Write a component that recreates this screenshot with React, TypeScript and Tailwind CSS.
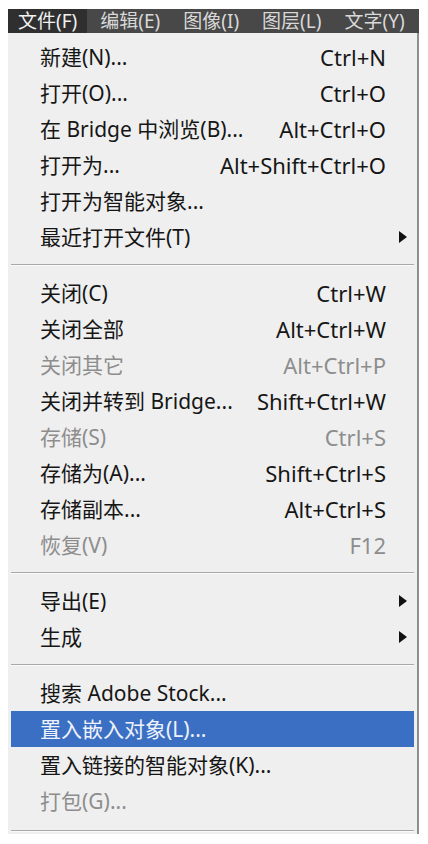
import React from "react";

type Item =
  | { kind: "row"; label: string; shortcut?: string; arrow?: boolean; disabled?: boolean; active?: boolean }
  | { kind: "sep" };

const items: Item[] = [
  { kind: "row", label: "新建(N)...", shortcut: "Ctrl+N" },
  { kind: "row", label: "打开(O)...", shortcut: "Ctrl+O" },
  { kind: "row", label: "在 Bridge 中浏览(B)...", shortcut: "Alt+Ctrl+O" },
  { kind: "row", label: "打开为...", shortcut: "Alt+Shift+Ctrl+O" },
  { kind: "row", label: "打开为智能对象..." },
  { kind: "row", label: "最近打开文件(T)", arrow: true },
  { kind: "sep" },
  { kind: "row", label: "关闭(C)", shortcut: "Ctrl+W" },
  { kind: "row", label: "关闭全部", shortcut: "Alt+Ctrl+W" },
  { kind: "row", label: "关闭其它", shortcut: "Alt+Ctrl+P", disabled: true },
  { kind: "row", label: "关闭并转到 Bridge...", shortcut: "Shift+Ctrl+W" },
  { kind: "row", label: "存储(S)", shortcut: "Ctrl+S", disabled: true },
  { kind: "row", label: "存储为(A)...", shortcut: "Shift+Ctrl+S" },
  { kind: "row", label: "存储副本...", shortcut: "Alt+Ctrl+S" },
  { kind: "row", label: "恢复(V)", shortcut: "F12", disabled: true },
  { kind: "sep" },
  { kind: "row", label: "导出(E)", arrow: true },
  { kind: "row", label: "生成", arrow: true },
  { kind: "sep" },
  { kind: "row", label: "搜索 Adobe Stock..." },
  { kind: "row", label: "置入嵌入对象(L)...", active: true },
  { kind: "row", label: "置入链接的智能对象(K)..." },
  { kind: "row", label: "打包(G)...", disabled: true },
];

const menus = ["文件(F)", "编辑(E)", "图像(I)", "图层(L)", "文字(Y)"];

function Arrow({ color }: { color: string }) {
  return (
    <svg width="8" height="12" viewBox="0 0 8 12" className="block">
      <polygon points="0,0 8,6 0,12" fill={color} />
    </svg>
  );
}

function Separator() {
  return (
    <div className="h-[20px] flex flex-col justify-center mx-[3px]">
      <div className="h-px bg-[#a9a9a9]" />
      <div className="h-px bg-[#fafafa]" />
    </div>
  );
}

export default function App() {
  return (
    <div className="min-h-[844px] bg-white pt-[9px] pl-[8px] font-['Noto_Sans','Noto_Sans_CJK_SC',sans-serif]">
      <div className="w-[411px]">
        <div className="flex h-[24px] bg-[#484848] gap-[3px] overflow-hidden whitespace-nowrap">
          {menus.map((m, i) => (
            <div
              key={m}
              className={
                i === 0
                  ? "px-[10px] h-[24px] leading-[24px] text-[19px] bg-[#2f2f2f] text-[#f2f2f2]"
                  : "px-[10px] h-[24px] leading-[24px] text-[19px] text-[#d9d9d9]"
              }
            >
              {m}
            </div>
          ))}
        </div>
        <div className="bg-[#efefef] border-r-2 border-[#8e8e8e] pt-[6px] pb-[2px]">
          {items.map((it, idx) => {
            if (it.kind === "sep") return <Separator key={idx} />;
            const textColor = it.active
              ? "text-[#eef2fa]"
              : it.disabled
              ? "text-[#8d8d8d]"
              : "text-[#161616]";
            return (
              <div
                key={idx}
                className={
                  "mx-[3px] h-[36px] flex items-center whitespace-nowrap " +
                  (it.active ? "bg-[#3b6fc3] " : "") +
                  textColor
                }
              >
                <div className="pl-[29px] flex-1 text-[21px] leading-[36px]">{it.label}</div>
                {it.shortcut && (
                  <div className="text-[22px] leading-[36px]">{it.shortcut}</div>
                )}
                <div className="w-[28px] h-[36px] flex items-center justify-end pr-[7px]">
                  {it.arrow && <Arrow color="#111111" />}
                </div>
              </div>
            );
          })}
          <div className="mt-[11px] mx-[3px]">
            <div className="h-px bg-[#a9a9a9]" />
            <div className="h-px bg-[#fafafa]" />
          </div>
        </div>
      </div>
    </div>
  );
}
